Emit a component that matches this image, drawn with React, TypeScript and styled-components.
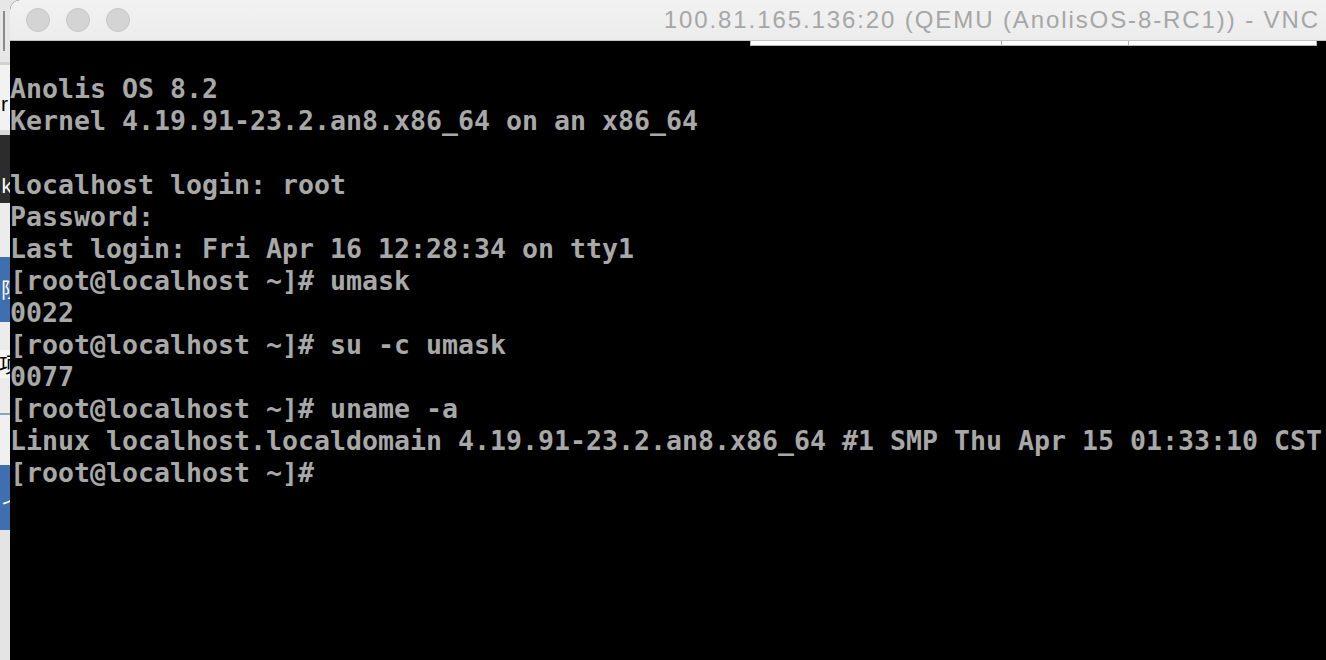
import React from "react";
import styled, { createGlobalStyle } from "styled-components";

const Global = createGlobalStyle`
  html, body { margin: 0; padding: 0; background: #e4e4e4; overflow: hidden; }
  #root { width: 1326px; height: 660px; }
`;

const Page = styled.div`
  display: flex;
  width: 1326px;
  height: 660px;
  overflow: hidden;
`;

const Sliver = styled.div`
  width: 10px;
  flex: 0 0 10px;
  display: flex;
  flex-direction: column;
  overflow: hidden;
  background: #e4e4e4;
`;

const Band = styled.div<{ $h: number; $bg: string; $fg?: string }>`
  height: ${(p) => p.$h}px;
  flex: 0 0 ${(p) => p.$h}px;
  background: ${(p) => p.$bg};
  color: ${(p) => p.$fg || "#000"};
  display: flex;
  align-items: center;
  justify-content: flex-end;
  position: relative;
  overflow: hidden;
  font-family: "Liberation Sans", "Noto Sans CJK SC", sans-serif;
  font-size: 21px;
  line-height: 1;
`;

const Glyph = styled.span<{ $shift: number; $dy?: number }>`
  display: block;
  margin-right: ${(p) => p.$shift}px;
  transform: translateY(${(p) => p.$dy || 0}px);
  white-space: nowrap;
`;

const Grip = styled.div`
  width: 2px;
  height: 40px;
  background: #8a8a8a;
  margin-right: 5px;
`;

const Window = styled.div`
  flex: 1;
  display: flex;
  flex-direction: column;
  border-top-left-radius: 10px;
  overflow: hidden;
  background: #000;
`;

const TitleBar = styled.div`
  height: 41px;
  flex: 0 0 41px;
  box-sizing: border-box;
  background: linear-gradient(#f2f2f2, #ececec);
  border-bottom: 1px solid #c2c2c2;
  display: flex;
  align-items: center;
  padding: 0 6px 0 16px;
`;

const Lights = styled.div`
  display: flex;
  gap: 16px;
`;

const Light = styled.div`
  width: 24px;
  height: 24px;
  box-sizing: border-box;
  border-radius: 50%;
  background: #d4d4d4;
  border: 1px solid #c6c6c6;
`;

const Title = styled.div`
  margin-left: auto;
  font-family: "Liberation Sans", Arial, sans-serif;
  font-size: 24px;
  letter-spacing: 1.9px;
  color: #a6a6a6;
  white-space: nowrap;
`;

const Screen = styled.div`
  flex: 1;
  position: relative;
  background: #000;
  padding-top: 32px;
`;

const Strip = styled.div`
  position: absolute;
  left: 740px;
  top: 0;
  width: 567px;
  height: 5px;
  box-sizing: border-box;
  background: #fff;
  border: 1px solid #b8b8b8;
  border-top: none;
`;

const Tick = styled.div<{ $x: number }>`
  position: absolute;
  left: ${(p) => p.$x}px;
  top: 0;
  width: 1px;
  height: 4px;
  background: #b0b0b0;
`;

const Console = styled.pre`
  margin: 0;
  font-family: "DejaVu Sans Mono", "Liberation Mono", monospace;
  font-weight: bold;
  font-size: 26.58px;
  line-height: 32px;
  color: #a8a8a8;
  white-space: pre;
`;

const lines = [
  "Anolis OS 8.2",
  "Kernel 4.19.91-23.2.an8.x86_64 on an x86_64",
  "",
  "localhost login: root",
  "Password:",
  "Last login: Fri Apr 16 12:28:34 on tty1",
  "[root@localhost ~]# umask",
  "0022",
  "[root@localhost ~]# su -c umask",
  "0077",
  "[root@localhost ~]# uname -a",
  "Linux localhost.localdomain 4.19.91-23.2.an8.x86_64 #1 SMP Thu Apr 15 01:33:10 CST",
  "[root@localhost ~]#",
];

export default function App() {
  return (
    <Page>
      <Global />
      <Sliver>
        <Band $h={62} $bg="#e7e7e7">
          <Grip />
        </Band>
        <Band $h={3} $bg="#d2d2d2" />
        <Band $h={65} $bg="#f2f2f2">
          <Glyph $shift={2} $dy={6}>r</Glyph>
        </Band>
        <Band $h={5} $bg="#dadada" />
        <Band $h={68} $bg="#2c2c2c" $fg="#fff">
          <Glyph $shift={-2} $dy={16}>k</Glyph>
        </Band>
        <Band $h={54} $bg="#ececec" />
        <Band $h={65} $bg="#3f6fae" $fg="#fff">
          <Glyph $shift={-12} $dy={0}>阻</Glyph>
        </Band>
        <Band $h={28} $bg="#ececec" />
        <Band $h={28} $bg="#f6f6f6">
          <Glyph $shift={-10}>项</Glyph>
        </Band>
        <Band $h={35} $bg="#ececec" />
        <Band $h={2} $bg="#8da2bb" />
        <Band $h={50} $bg="#f0f0f0" />
        <Band $h={65} $bg="#3f6fae" $fg="#fff">
          <Glyph $shift={-12} $dy={5}>イ</Glyph>
        </Band>
        <Band $h={130} $bg="#e4e4e4" />
      </Sliver>
      <Window>
        <TitleBar>
          <Lights>
            <Light />
            <Light />
            <Light />
          </Lights>
          <Title>100.81.165.136:20 (QEMU (AnolisOS-8-RC1)) - VNC</Title>
        </TitleBar>
        <Screen>
          <Strip>
            <Tick $x={250} />
            <Tick $x={377} />
          </Strip>
          <Console>{lines.join("\n")}</Console>
        </Screen>
      </Window>
    </Page>
  );
}
